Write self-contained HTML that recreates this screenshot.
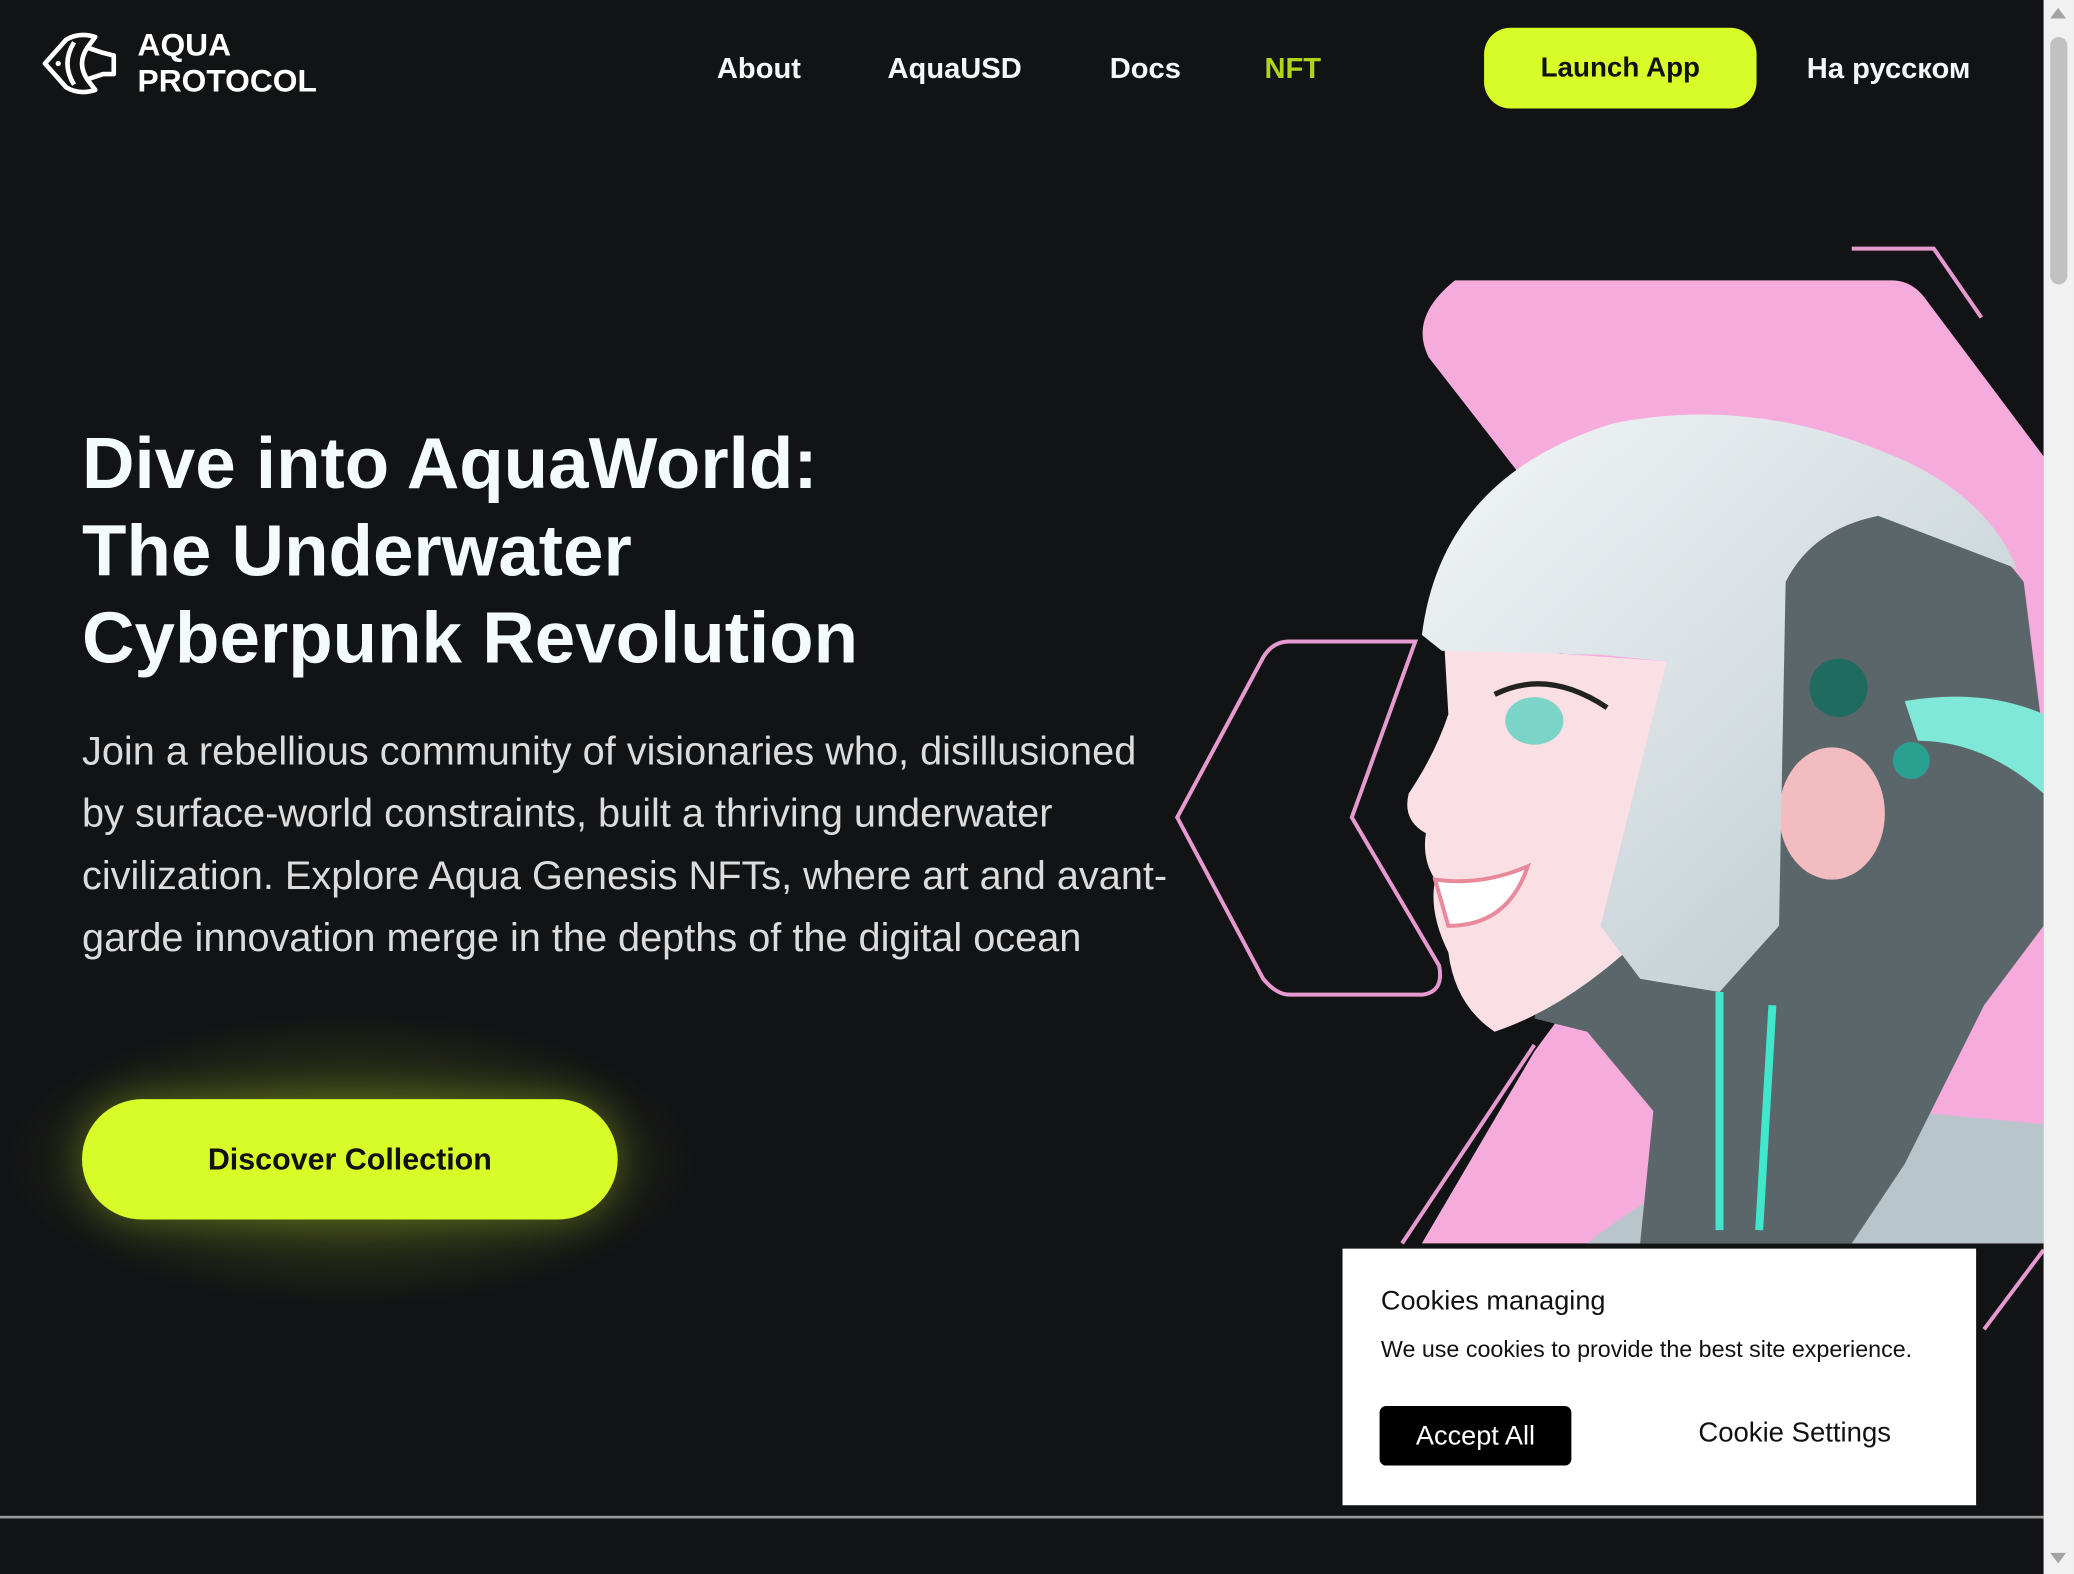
<!DOCTYPE html>
<html><head><meta charset="utf-8"><style>
html,body{margin:0;padding:0;background:#121315;overflow:hidden;width:2074px;height:1574px}
#w{position:absolute;left:0;top:0;width:1568px;height:1190px;transform:scale(1.32270);transform-origin:0 0;font-family:"Liberation Sans",sans-serif;color:#fff;background:#121315}
.a{position:absolute;white-space:nowrap}
.nav{font-weight:bold;font-size:22px;top:39px;color:#f4f7f7}
</style></head><body><div id="w">
<svg class="a" style="left:0;top:0" width="1568" height="1190" viewBox="0 0 1568 1190">
 <defs>
  <radialGradient id="g" cx="0.5" cy="0.5" r="0.5"><stop offset="0" stop-color="#d8fc28" stop-opacity="0.25"/><stop offset="1" stop-color="#d8fc28" stop-opacity="0"/></radialGradient>
  <linearGradient id="hair" x1="0" y1="0" x2="1" y2="1"><stop offset="0" stop-color="#f3f6f8"/><stop offset="1" stop-color="#b9c7cc"/></linearGradient>
 </defs>
 <ellipse cx="265" cy="877" rx="260" ry="110" fill="url(#g)"/>
 <path d="M1100 212 L1430 212 Q1445 212 1455 225 L1545 345 L1545 940 L1075 940 L1160 795 L1230 700 L1150 360 L1080 270 Q1065 240 1100 212 Z" fill="#f6abdd"/>
 <path d="M1400 188 L1462 188 L1498 240" stroke="#e79ad0" stroke-width="3" fill="none"/>
 <path d="M975 485 L1070 485 L1022 618 L1088 730 Q1092 750 1075 752 L975 752 Q965 752 955 740 L890 618 L955 497 Q962 485 975 485Z" stroke="#e79ad0" stroke-width="3" fill="none"/>
 <path d="M1160 790 L1060 940" stroke="#e79ad0" stroke-width="3"/>
 <path d="M1545 945 L1500 1005" stroke="#e79ad0" stroke-width="3"/>
 <path d="M1200 940 Q1300 860 1440 840 L1545 850 L1545 940Z" fill="#b8c6cc"/>
 <path d="M1340 380 Q1470 360 1530 440 L1545 560 L1545 700 L1500 760 L1440 880 L1400 940 L1240 940 L1250 840 L1200 780 L1160 770 L1190 650 L1250 600 L1340 420Z" fill="#5b666b"/>
 <circle cx="1390" cy="520" r="22" fill="#1f6b60"/><circle cx="1445" cy="575" r="14" fill="#2aa090"/>
 <path d="M1300 750 L1300 930 M1340 760 L1330 930" stroke="#3fe8cc" stroke-width="6"/>
 <path d="M1440 530 Q1500 520 1545 540 L1545 600 Q1500 560 1450 560Z" fill="#7fe8d8"/>
 <path d="M1092 488 L1260 500 L1250 700 Q1190 760 1130 780 Q1100 760 1095 720 Q1080 690 1085 665 Q1075 650 1078 630 Q1060 620 1065 600 Q1085 570 1095 540Z" fill="#fae0e5"/>
 <path d="M1085 665 Q1120 670 1155 655 Q1140 700 1095 700Z" fill="#fff" stroke="#e88a9c" stroke-width="3"/>
 <ellipse cx="1160" cy="545" rx="22" ry="18" fill="#7ad4c8"/>
 <path d="M1130 525 Q1170 505 1215 535" stroke="#222" stroke-width="4" fill="none"/>
 <ellipse cx="1385" cy="615" rx="40" ry="50" fill="#f3bcc0"/>
 <path d="M1075 480 Q1090 360 1220 320 Q1320 300 1420 340 Q1500 370 1525 430 L1420 390 Q1370 400 1350 440 L1345 700 L1300 750 L1240 740 L1210 700 L1260 500 L1210 495 L1090 492Z" fill="url(#hair)"/>
</svg>
<svg class="a" style="left:30px;top:22px" width="60" height="52" viewBox="0 0 60 52">
 <path d="M42 6 Q30 2 20 8 L4 26 L20 44 Q30 50 42 46 L36 38 L48 34 L56 34 L56 20 L48 18 L36 14Z" fill="none" stroke="#fff" stroke-width="3.5" stroke-linejoin="round"/>
 <path d="M26 10 Q16 26 26 42" fill="none" stroke="#fff" stroke-width="3.5"/>
 <path d="M36 14 Q28 26 36 38" fill="none" stroke="#fff" stroke-width="3.5"/>
 <circle cx="14" cy="26" r="2" fill="#fff"/>
</svg>
<div class="a" style="left:104px;top:21px;font-weight:bold;font-size:24px;line-height:27px">AQUA<br>PROTOCOL</div>
<div class="a nav" style="left:542px">About</div>
<div class="a nav" style="left:671px">AquaUSD</div>
<div class="a nav" style="left:839px">Docs</div>
<div class="a nav" style="left:956px;color:#b2d21c">NFT</div>
<div class="a" style="left:1122px;top:21px;width:206px;height:61px;background:#d8fc28;border-radius:20px;color:#111;font-weight:bold;font-size:21px;line-height:61px;text-align:center">Launch App</div>
<div class="a nav" style="left:1366px">На русском</div>
<div class="a" style="left:62px;top:317px;font-weight:bold;font-size:55px;line-height:66px;color:#f4fbfb">Dive into AquaWorld:<br>The Underwater<br>Cyberpunk Revolution</div>
<div class="a" style="left:62px;top:545px;font-size:30px;line-height:47px;color:#dcdcdc;letter-spacing:0px">Join a rebellious community of visionaries who, disillusioned<br>by surface-world constraints, built a thriving underwater<br>civilization. Explore Aqua Genesis NFTs, where art and avant-<br>garde innovation merge in the depths of the digital ocean</div>
<div class="a" style="left:62px;top:831px;width:405px;height:91px;border-radius:46px;background:#d8fc28;color:#111;font-weight:bold;font-size:23px;line-height:91px;text-align:center;box-shadow:0 0 30px rgba(216,252,40,0.3)">Discover Collection</div>
<div class="a" style="left:1015px;top:944px;width:479px;height:194px;background:#fff;color:#111">
 <div class="a" style="left:29px;top:28px;font-size:20.5px">Cookies managing</div>
 <div class="a" style="left:29px;top:66px;font-size:17.6px">We use cookies to provide the best site experience.</div>
 <div class="a" style="left:28px;top:119px;width:145px;height:45px;background:#000;border-radius:5px;color:#fff;font-size:20.5px;line-height:45px;text-align:center">Accept All</div>
 <div class="a" style="left:269px;top:128px;font-size:20.8px">Cookie Settings</div>
</div>
<div class="a" style="left:0;top:1146px;width:1545px;height:2px;background:#9a9a9a"></div>
<div class="a" style="left:1545px;top:0;width:23px;height:1190px;background:#f1f1f1"></div>
<div class="a" style="left:1550px;top:28px;width:13px;height:187px;background:#c1c1c1;border-radius:7px"></div>
<div class="a" style="left:1550px;top:6px;width:0;height:0;border-left:6px solid transparent;border-right:6px solid transparent;border-bottom:8px solid #a3a3a3"></div>
<div class="a" style="left:1550px;top:1174px;width:0;height:0;border-left:6px solid transparent;border-right:6px solid transparent;border-top:8px solid #a3a3a3"></div>
</div></body></html>
